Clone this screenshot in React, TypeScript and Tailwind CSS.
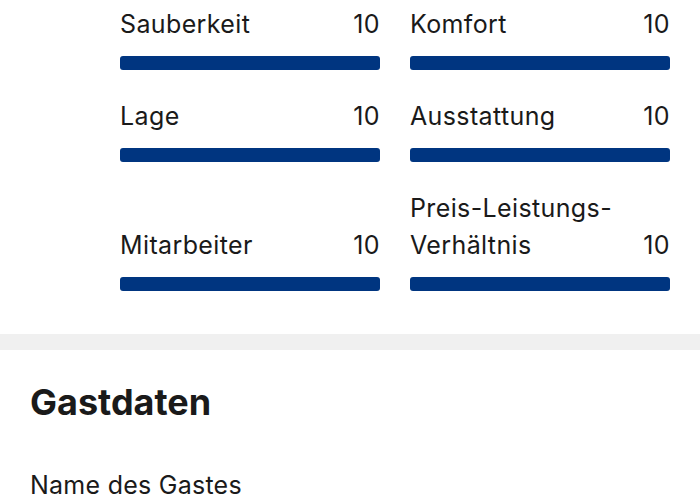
import React from "react";

const rows: { label: React.ReactNode; score: string }[][] = [
  [
    { label: "Sauberkeit", score: "10" },
    { label: "Komfort", score: "10" },
  ],
  [
    { label: "Lage", score: "10" },
    { label: "Ausstattung", score: "10" },
  ],
  [
    { label: "Mitarbeiter", score: "10" },
    {
      label: (
        <>
          Preis-Leistungs-
          <br />
          Verhältnis
        </>
      ),
      score: "10",
    },
  ],
];

function Cell({ label, score }: { label: React.ReactNode; score: string }) {
  return (
    <div className="flex flex-col justify-end">
      <div className="flex items-end justify-between text-[25px] leading-[37px] tracking-[0.015em] text-[#1a1a1a]">
        <span>{label}</span>
        <span>{score}</span>
      </div>
      <div className="mt-[13px] h-[14px] rounded-[3px] bg-[#003580]" />
    </div>
  );
}

export default function App() {
  return (
    <div
      className="w-[700px] h-[500px] overflow-hidden bg-white"
      style={{ fontFamily: "Inter, 'Noto Sans', sans-serif" }}
    >
      <div className="pl-[120px] pr-[30px] pt-[6px]">
        <div className="grid grid-cols-2 gap-x-[30px] gap-y-[28px]">
          {rows.flat().map((c, i) => (
            <Cell key={i} label={c.label} score={c.score} />
          ))}
        </div>
      </div>
      <div className="mt-[43px] h-[16px] bg-[#f0f0f0]" />
      <div className="px-[30px]">
        <h2 className="mt-[30px] text-[36px] leading-[44px] font-bold text-[#1a1a1a]">
          Gastdaten
        </h2>
        <p className="mt-[46px] text-[25px] leading-[30px] tracking-[0.01em] text-[#1a1a1a]">
          Name des Gastes
        </p>
      </div>
    </div>
  );
}
